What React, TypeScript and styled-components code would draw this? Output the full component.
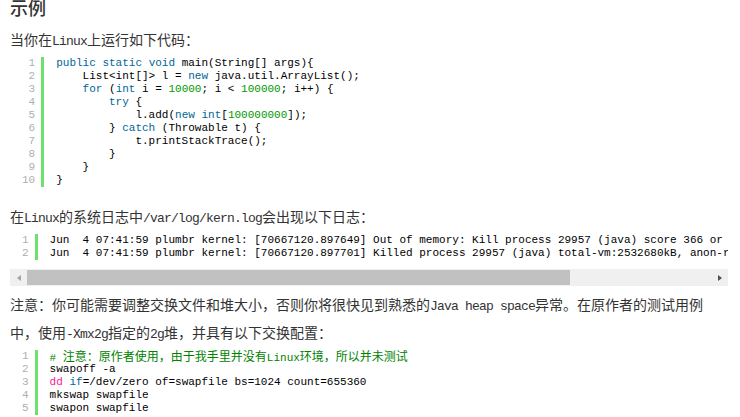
import React from "react";
import styled, { createGlobalStyle } from "styled-components";

const GlobalStyle = createGlobalStyle`
  html, body { margin: 0; padding: 0; background: #fff; overflow: hidden; }
  body {
    font-family: "Noto Sans CJK SC", "Microsoft YaHei", sans-serif;
    color: #333;
  }
`;

const Page = styled.main`
  width: 718px;
  padding: 0 12px 0 10px;
`;

const Heading = styled.h2`
  margin: -4px 0 7px;
  font-size: 18px;
  line-height: 22px;
  font-weight: 500;
  color: #333;
`;

const Para = styled.p`
  margin: 0;
  max-width: 700px;
  font-size: 14px;
  line-height: 28px;
`;

const Mono = styled.span`
  font-family: "Liberation Mono", monospace;
  font-size: 13px;
  line-height: 1;
  letter-spacing: -0.8px;
`;

const Block = styled.div<{ $scroll?: boolean }>`
  margin: 4px 0 ${(p) => (p.$scroll ? 0 : 15)}px;
  overflow: hidden;
  background: #fff;
  font-family: "Liberation Mono", "Noto Sans CJK SC", monospace;
  font-size: 11px;
  line-height: 13px;
`;

const Rows = styled.div`
  display: flex;
  width: max-content;
`;

const Gutter = styled.div`
  padding: 0 6px 0 12px;
  border-right: 3px solid #6ce26c;
  color: #afafaf;
  text-align: right;
`;

const Lines = styled.div`
  padding-left: 12px;
  color: #000;
`;

const Line = styled.div`
  height: 13px;
  white-space: pre;
`;

type Kind = "kw" | "num" | "com" | "fn";
const tokColors: Record<Kind, string> = {
  kw: "#006699",
  num: "#009900",
  com: "#008200",
  fn: "#ff1493",
};

const Tok = styled.span<{ $kind: Kind }>`
  color: ${(p) => tokColors[p.$kind]};
`;

const Cjk = styled.span`
  font-family: "Noto Sans CJK SC", sans-serif;
  font-size: 12px;
  line-height: 1;
`;

const ScrollTrack = styled.div`
  display: flex;
  align-items: center;
  height: 17px;
  margin: 9px 0 4px;
  background: #f0f0f0;
`;

const ScrollBtn = styled.div<{ $dir: "left" | "right"; $active?: boolean }>`
  width: 17px;
  height: 17px;
  flex: none;
  display: flex;
  align-items: center;
  justify-content: center;
  &::before {
    content: "";
    border-top: 3.5px solid transparent;
    border-bottom: 3.5px solid transparent;
    ${(p) => (p.$dir === "left" ? "border-right" : "border-left")}: 4px solid
      ${(p) => (p.$active ? "#505050" : "#a3a3a3")};
  }
`;

const ThumbRail = styled.div`
  flex: 1;
  height: 100%;
  display: flex;
  align-items: center;
`;

const Thumb = styled.div`
  height: 15px;
  background: #c1c1c1;
`;

const K = ({ children }: { children: React.ReactNode }) => <Tok $kind="kw">{children}</Tok>;
const N = ({ children }: { children: React.ReactNode }) => <Tok $kind="num">{children}</Tok>;

const javaLines: React.ReactNode[] = [
  <><K>public</K> <K>static</K> <K>void</K> {"main(String[] args){"}</>,
  <>{"    List<int[]> l = "}<K>new</K>{" java.util.ArrayList();"}</>,
  <>{"    "}<K>for</K>{" ("}<K>int</K>{" i = "}<N>10000</N>{"; i < "}<N>100000</N>{"; i++) {"}</>,
  <>{"        "}<K>try</K>{" {"}</>,
  <>{"            l.add("}<K>new</K> <K>int</K>{"["}<N>100000000</N>{"]);"}</>,
  <>{"        } "}<K>catch</K>{" (Throwable t) {"}</>,
  <>{"            t.printStackTrace();"}</>,
  <>{"        }"}</>,
  <>{"    }"}</>,
  <>{"}"}</>,
];

const logLines: React.ReactNode[] = [
  "Jun  4 07:41:59 plumbr kernel: [70667120.897649] Out of memory: Kill process 29957 (java) score 366 or sacrifice child",
  "Jun  4 07:41:59 plumbr kernel: [70667120.897701] Killed process 29957 (java) total-vm:2532680kB, anon-rss:1416508kB, file-rss:0kB",
];

const bashLines: React.ReactNode[] = [
  <Tok $kind="com">
    # <Cjk>注意：原作者使用，由于我手里并没有</Cjk>Linux<Cjk>环境，所以并未测试</Cjk>
  </Tok>,
  "swapoff -a",
  <><Tok $kind="fn">dd</Tok> <K>if</K>{"=/dev/zero of=swapfile bs=1024 count=655360"}</>,
  "mkswap swapfile",
  "swapon swapfile",
];

function CodeBlock({ lines, scroll }: { lines: React.ReactNode[]; scroll?: number }) {
  return (
    <>
      <Block $scroll={scroll !== undefined}>
        <Rows>
          <Gutter>
            {lines.map((_, i) => (
              <Line key={i}>{i + 1}</Line>
            ))}
          </Gutter>
          <Lines>
            {lines.map((l, i) => (
              <Line key={i}>{l}</Line>
            ))}
          </Lines>
        </Rows>
      </Block>
      {scroll !== undefined && (
        <ScrollTrack>
          <ScrollBtn $dir="left" />
          <ThumbRail>
            <Thumb style={{ width: `${scroll * 100}%` }} />
          </ThumbRail>
          <ScrollBtn $dir="right" $active />
        </ScrollTrack>
      )}
    </>
  );
}

export default function App() {
  return (
    <Page>
      <GlobalStyle />
      <Heading>示例</Heading>
      <Para>
        当你在<Mono>Linux</Mono>上运行如下代码：
      </Para>
      <CodeBlock lines={javaLines} />
      <Para>
        在<Mono>Linux</Mono>的系统日志中<Mono>/var/log/kern.log</Mono>会出现以下日志：
      </Para>
      <CodeBlock lines={logLines} scroll={0.794} />
      <Para>
        注意：你可能需要调整交换文件和堆大小，否则你将很快见到熟悉的<Mono>Java heap space</Mono>
        异常。在原作者的测试用例中，使用<Mono>-Xmx2g</Mono>指定的<Mono>2g</Mono>堆，并具有以下交换配置：
      </Para>
      <CodeBlock lines={bashLines} />
    </Page>
  );
}
